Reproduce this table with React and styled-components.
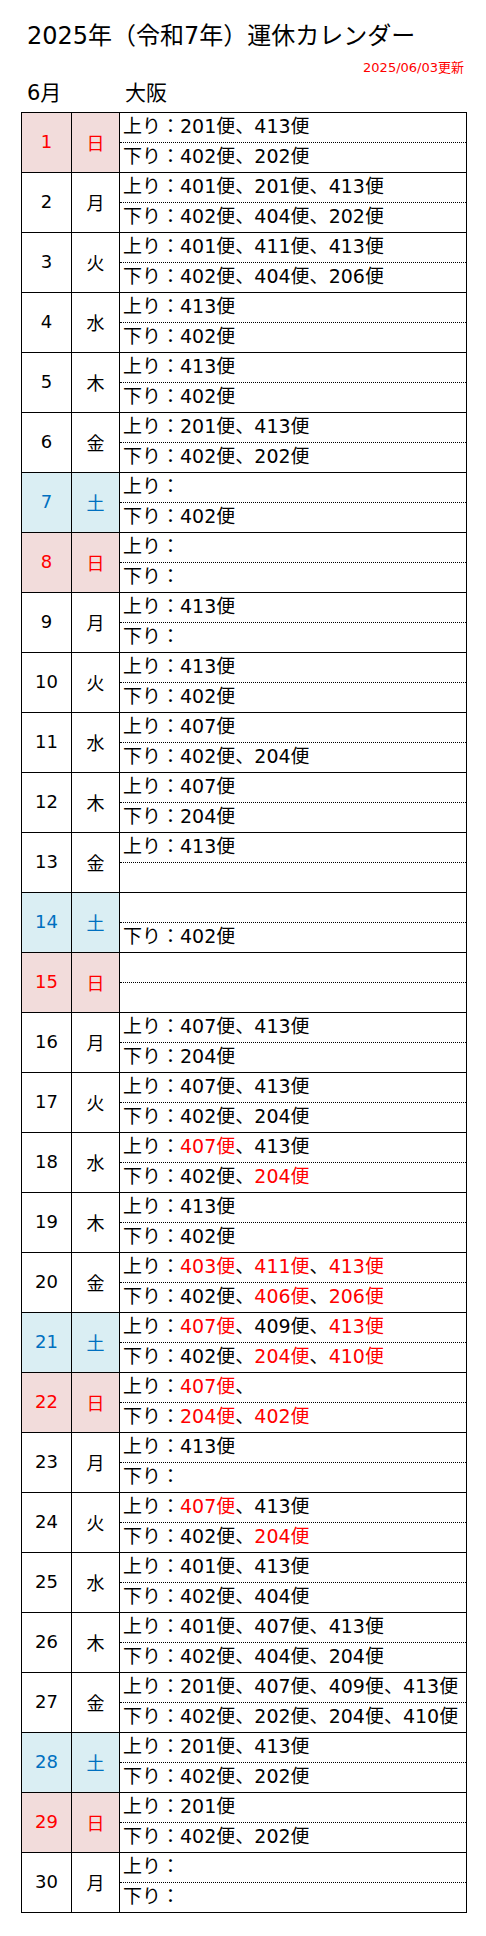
import styled, { createGlobalStyle } from 'styled-components';

const GlobalStyle = createGlobalStyle`
  html, body { margin: 0; padding: 0; background: #fff; }
  body { font-family: "DejaVu Sans", "Noto Sans CJK JP", sans-serif; color: #000; }
`;

const Page = styled.div`
  width: 486px;
  padding: 0 0 24px 21px;
  box-sizing: border-box;
`;

const Title = styled.h1`
  margin: 0;
  padding: 22px 0 0 6px;
  font-size: 24px;
  font-weight: normal;
  line-height: 28px;
  white-space: nowrap;
`;

const UpdateNote = styled.div`
  margin-top: 11px;
  padding-right: 22px;
  text-align: right;
  font-size: 13px;
  line-height: 14px;
  color: #ff0000;
`;

const MonthRow = styled.div`
  display: flex;
  padding: 4px 0 0 6px;
  height: 28px;
  font-size: 21px;
  line-height: 28px;
`;

const MonthLabel = styled.div`
  width: 98px;
`;

const Calendar = styled.div`
  margin-top: 5px;
  width: 446px;
  border: 1px solid #000;
  border-top: none;
  box-sizing: border-box;
`;

const DayRow = styled.div`
  display: grid;
  grid-template-columns: 50px 48px 1fr;
  border-top: 1px solid #000;
  height: 60px;
  box-sizing: border-box;
`;

const palette = {
  sun: { bg: '#f2dcdb', fg: '#ff0000' },
  sat: { bg: '#daeef3', fg: '#0070c0' },
  normal: { bg: '#ffffff', fg: '#000000' },
};

const DateCell = styled.div`
  display: flex;
  align-items: center;
  justify-content: center;
  background: ${(p) => palette[p.kind].bg};
  color: ${(p) => palette[p.kind].fg};
  border-right: 1px solid #000;
  font-size: 18px;
  padding-bottom: 2px;
  box-sizing: border-box;
`;

const Lines = styled.div`
  display: flex;
  flex-direction: column;
`;

const Line = styled.div`
  height: 29px;
  line-height: 27px;
  padding-left: 3px;
  font-size: 19px;
  white-space: nowrap;
  & + & { border-top: 1px dotted #000; }
`;

const Flight = styled.span`
  color: ${(p) => (p.changed ? '#ff0000' : 'inherit')};
`;

const days = [
  [1, '日', 'sun', '201,413', '402,202'],
  [2, '月', 'normal', '401,201,413', '402,404,202'],
  [3, '火', 'normal', '401,411,413', '402,404,206'],
  [4, '水', 'normal', '413', '402'],
  [5, '木', 'normal', '413', '402'],
  [6, '金', 'normal', '201,413', '402,202'],
  [7, '土', 'sat', '', '402'],
  [8, '日', 'sun', '', ''],
  [9, '月', 'normal', '413', ''],
  [10, '火', 'normal', '413', '402'],
  [11, '水', 'normal', '407', '402,204'],
  [12, '木', 'normal', '407', '204'],
  [13, '金', 'normal', '413', null],
  [14, '土', 'sat', null, '402'],
  [15, '日', 'sun', null, null],
  [16, '月', 'normal', '407,413', '204'],
  [17, '火', 'normal', '407,413', '402,204'],
  [18, '水', 'normal', '*407,413', '402,*204'],
  [19, '木', 'normal', '413', '402'],
  [20, '金', 'normal', '*403,*411,*413', '402,*406,*206'],
  [21, '土', 'sat', '*407,409,*413', '402,*204,*410'],
  [22, '日', 'sun', '*407,', '*204,*402'],
  [23, '月', 'normal', '413', ''],
  [24, '火', 'normal', '*407,413', '402,*204'],
  [25, '水', 'normal', '401,413', '402,404'],
  [26, '木', 'normal', '401,407,413', '402,404,204'],
  [27, '金', 'normal', '201,407,409,413', '402,202,204,410'],
  [28, '土', 'sat', '201,413', '402,202'],
  [29, '日', 'sun', '201', '402,202'],
  [30, '月', 'normal', '', ''],
];

// null = 空欄, '' = ラベルのみ, '*' 付きは赤字（変更便）
function FlightLine({ label, list }) {
  if (list === null) return <Line />;
  const items = list === '' ? [] : list.split(',');
  return (
    <Line>
      {label}：
      {items.map((f, i) => (
        <span key={i}>
          {i > 0 && '、'}
          {f && <Flight changed={f.startsWith('*')}>{f.replace('*', '')}便</Flight>}
        </span>
      ))}
    </Line>
  );
}

export default function App() {
  return (
    <Page>
      <GlobalStyle />
      <Title>2025年（令和7年）運休カレンダー</Title>
      <UpdateNote>2025/06/03更新</UpdateNote>
      <MonthRow>
        <MonthLabel>6月</MonthLabel>
        <div>大阪</div>
      </MonthRow>
      <Calendar>
        {days.map(([d, w, kind, up, down]) => (
          <DayRow key={d}>
            <DateCell kind={kind}>{d}</DateCell>
            <DateCell kind={kind}>{w}</DateCell>
            <Lines>
              <FlightLine label="上り" list={up} />
              <FlightLine label="下り" list={down} />
            </Lines>
          </DayRow>
        ))}
      </Calendar>
    </Page>
  );
}
